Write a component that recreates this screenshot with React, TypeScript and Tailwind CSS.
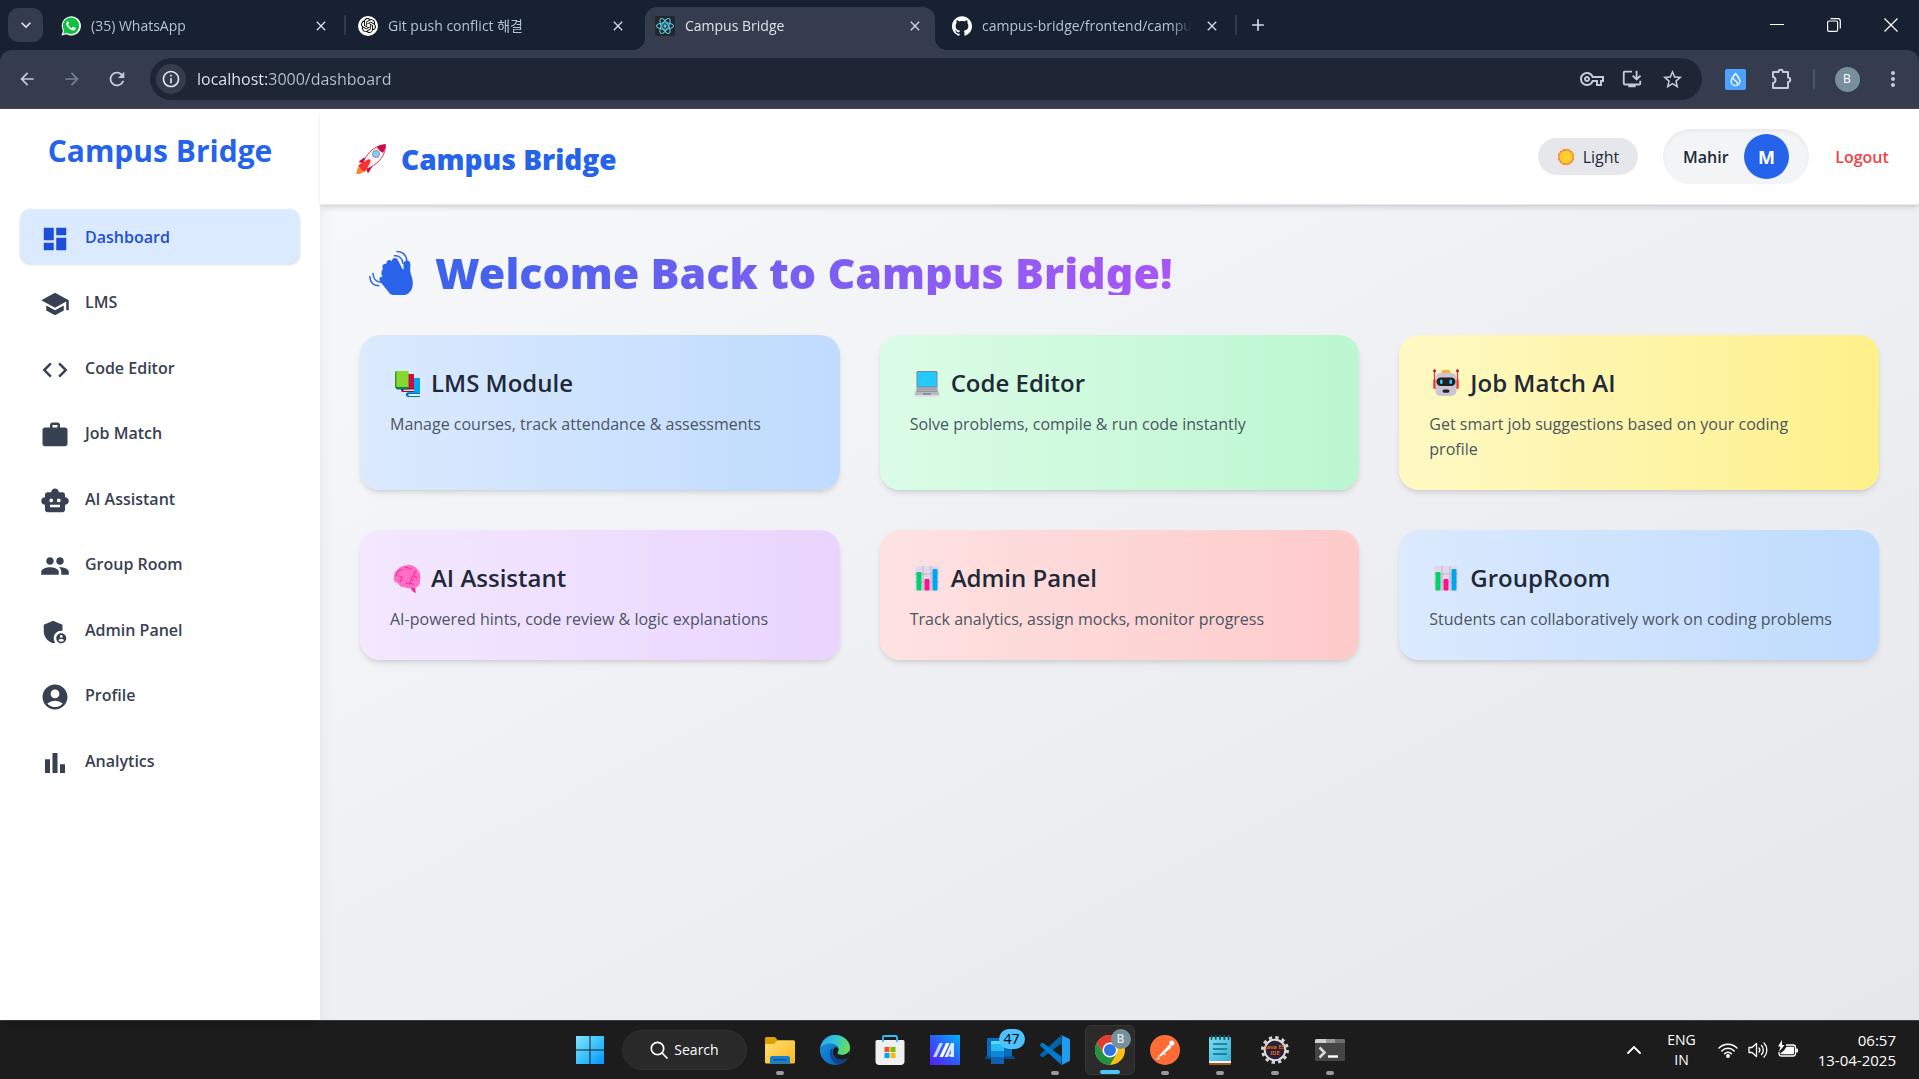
import type { ReactNode } from "react";
import {
  MdAccountCircle,
  MdAdd,
  MdAdminPanelSettings,
  MdArrowBack,
  MdArrowForward,
  MdBarChart,
  MdClose,
  MdCode,
  MdDashboard,
  MdGroup,
  MdInfoOutline,
  MdKeyboardArrowDown,
  MdMoreVert,
  MdOutlineExtension,
  MdOutlineInstallDesktop,
  MdOutlineVpnKey,
  MdRefresh,
  MdSchool,
  MdSmartToy,
  MdStarBorder,
  MdWork,
} from "react-icons/md";
import { SiGithub, SiOpenai } from "react-icons/si";

/* ---------- Favicons ---------- */

const WhatsAppIcon = () => (
  <svg viewBox="0 0 20 20" className="size-5" aria-hidden="true">
    <path d="M0.5 19.5 L2 14.6 A9.6 9.6 0 1 1 5.6 18.2 Z" fill="#fff" />
    <path d="M2.2 17.8 L3.2 14.4 A8.2 8.2 0 1 1 5.9 16.9 Z" fill="#0fc143" />
    <path
      d="M7 5.2c-.4 0-1.7.7-1.7 2.4 0 1.600 1.200 3.200 1.900 4 1 1.200 3.300 2.900 5 2.900 1.500 0 2.500-.9 2.500-1.900 0-.3 0-.6-.2-.7l-2.100-1.100c-.3-.1-.5 0-.7.2l-.7.9c-.2.2-.4.200-.7.1-1.200-.5-2.400-1.600-3.100-2.900-.1-.2 0-.4.100-.6l.6-.8c.1-.2.100-.4 0-.6l-.7-1.600c-.1-.3-.2-.3-.2-.3z"
      fill="#fff"
    />
  </svg>
);

const ChatGptIcon = () => (
  <span className="flex size-5 shrink-0 items-center justify-center rounded-full bg-white text-black">
    <SiOpenai className="size-[15px]" aria-hidden="true" />
  </span>
);

const ReactIcon = () => (
  <svg viewBox="0 0 20 20" className="size-5" aria-hidden="true">
    <rect width="20" height="20" rx="2" fill="#23272a" />
    <g fill="none" stroke="#5ac8e8" strokeWidth="1.100">
      <ellipse cx="10" cy="10" rx="8.500" ry="3.300" />
      <ellipse cx="10" cy="10" rx="8.500" ry="3.300" transform="rotate(60 10 10)" />
      <ellipse cx="10" cy="10" rx="8.500" ry="3.300" transform="rotate(120 10 10)" />
    </g>
    <circle cx="10" cy="10" r="1.700" fill="#5ac8e8" />
  </svg>
);

/* ---------- Browser chrome ---------- */

function Tab({ icon, title, active = false }: { icon: ReactNode; title: string; active?: boolean }) {
  return (
    <div
      className={
        active
          ? "relative flex h-[43px] w-[290px] items-center gap-2.5 rounded-t-xl bg-[#343c4d] px-2.5 pb-1.5 text-[#dfe2ea] before:absolute before:bottom-0 before:-left-3 before:size-3 before:bg-[radial-gradient(circle_at_0_0,#182131_12px,#343c4d_12px)] after:absolute after:-right-3 after:bottom-0 after:size-3 after:bg-[radial-gradient(circle_at_100%_0,#182131_12px,#343c4d_12px)]"
          : "flex h-[43px] w-[290px] items-center gap-2.5 px-2.5 pb-1.5 text-[#b4c1d8]"
      }
    >
      <span className="shrink-0">{icon}</span>
      <span className="min-w-0 flex-1 overflow-hidden text-sm whitespace-nowrap [mask-image:linear-gradient(90deg,#000_90%,transparent)]">
        {title}
      </span>
      <button aria-label={`Close ${title}`} className="flex size-5 shrink-0 items-center justify-center text-[#d3dbea]">
        <MdClose className="size-4" />
      </button>
    </div>
  );
}

const TabDivider = ({ hidden = false }: { hidden?: boolean }) => (
  <span className="mb-[7px] flex w-[7px] justify-center">
    <span className={hidden ? "h-5 w-0.5" : "h-5 w-0.5 rounded bg-[#323b4c]"} />
  </span>
);

function TabStrip() {
  return (
    <div className="flex h-[50px] items-end justify-between bg-[#182131]">
      <div className="flex min-w-0 items-center pl-2">
        <button
          aria-label="Search tabs"
          className="mr-2 mb-[7px] flex h-[34px] w-[35px] items-center justify-center rounded-[10px] bg-[#343c4d] text-[#dfe5f0]"
        >
          <MdKeyboardArrowDown className="size-5" />
        </button>
        <Tab icon={<WhatsAppIcon />} title="(35) WhatsApp" />
        <TabDivider />
        <Tab icon={<ChatGptIcon />} title="Git push conflict 해결" />
        <TabDivider hidden />
        <Tab icon={<ReactIcon />} title="Campus Bridge" active />
        <TabDivider hidden />
        <Tab icon={<SiGithub className="size-5 text-white" />} title="campus-bridge/frontend/campu" />
        <TabDivider />
        <button aria-label="New tab" className="mb-[7px] flex h-8 w-[38px] items-center justify-center text-[#d3dbea]">
          <MdAdd className="size-5" />
        </button>
      </div>
      <div className="flex h-[50px] text-white">
        <button aria-label="Minimize" className="flex w-[57px] items-center justify-center">
          <svg viewBox="0 0 14 14" className="size-3.5" fill="none" stroke="currentColor">
            <path d="M0 6.500h14" />
          </svg>
        </button>
        <button aria-label="Restore" className="flex w-[57px] items-center justify-center">
          <svg viewBox="0 0 14 14" className="size-3.5" fill="none" stroke="currentColor" strokeWidth="1.200">
            <rect x="0.600" y="3" width="10" height="10.400" rx="1.500" />
            <path d="M3.500 0.700h7.500a2.300 2.300 0 0 1 2.300 2.300v7.500" />
          </svg>
        </button>
        <button aria-label="Close window" className="flex w-[57px] items-center justify-center">
          <svg viewBox="0 0 14 14" className="size-3.5" fill="none" stroke="currentColor" strokeWidth="1.200">
            <path d="M0.500 0.500l13 13M13.500 0.500l-13 13" />
          </svg>
        </button>
      </div>
    </div>
  );
}

function Toolbar() {
  return (
    <div className="flex h-[59px] items-center rounded-t-xl border-b border-[#4b4553] bg-[#343c4d] pl-1 text-[#c3cbdb]">
      <button aria-label="Back" className="flex w-[45px] justify-center">
        <MdArrowBack className="size-5" />
      </button>
      <button aria-label="Forward" className="flex w-[45px] justify-center text-[#788193]">
        <MdArrowForward className="size-5" />
      </button>
      <button aria-label="Reload" className="flex w-[45px] justify-center">
        <MdRefresh className="size-[22px]" />
      </button>
      <div className="ml-[11px] flex h-[42px] flex-1 items-center rounded-full bg-[#1e2636] pr-2.5 pl-1.5">
        <button
          aria-label="View site information"
          className="flex size-[30px] items-center justify-center rounded-full bg-[#343c4d] text-[#e0e4ee]"
        >
          <MdInfoOutline className="size-5" />
        </button>
        <input
          aria-label="Address"
          defaultValue="localhost:3000/dashboard"
          className="ml-[11px] min-w-0 flex-1 bg-[linear-gradient(90deg,#e6eaf4_71px,#b7c1d4_71px)] bg-clip-text text-base text-transparent outline-none"
        />
        <button aria-label="Manage passwords" className="flex w-10 justify-center">
          <MdOutlineVpnKey className="size-6" />
        </button>
        <button aria-label="Install app" className="flex w-10 justify-center">
          <MdOutlineInstallDesktop className="size-[22px]" />
        </button>
        <button aria-label="Bookmark this tab" className="flex w-10 justify-center">
          <MdStarBorder className="size-[23px]" />
        </button>
      </div>
      <div className="flex items-center pr-[3px] pl-2.5">
        <button aria-label="Wallet extension" className="flex w-[46px] justify-center">
          <svg viewBox="0 0 21 21" className="size-[21px]">
            <rect width="21" height="21" rx="2" fill="#4da2ff" />
            <path d="M10.500 4.500c2 2.500 4.400 5 4.400 7.800a4.400 4.400 0 0 1-8.800 0c0-2.800 2.400-5.300 4.400-7.800z" fill="none" stroke="#fff" strokeWidth="1.300" />
            <path d="M8.300 9c0 3 5.200 2.700 4.200 6.500" fill="none" stroke="#fff" strokeWidth="1.300" />
          </svg>
        </button>
        <button aria-label="Extensions" className="flex w-[46px] justify-center">
          <svg viewBox="0 0 24 24" className="size-6" fill="none" stroke="currentColor" strokeWidth="2" strokeLinejoin="round">
            <path d="M4 5h5.500a2.200 2.200 0 0 1 4.400 0H19v5.500a2.200 2.200 0 0 1 0 4.400V21H4v-5c3.300-.5 3.300-5.500 0-6z" />
          </svg>
        </button>
        <span className="flex w-5 justify-center">
          <span className="h-5 w-0.5 rounded bg-[#4d5769]" />
        </span>
        <button aria-label="Profile B" className="flex w-[46px] justify-center">
          <span className="flex size-[25px] items-center justify-center rounded-full bg-[#78909c] text-xs text-white">B</span>
        </button>
        <button aria-label="Browser menu" className="flex w-[46px] justify-center">
          <MdMoreVert className="size-6" />
        </button>
      </div>
    </div>
  );
}

/* ---------- Sidebar ---------- */

const navItems = [
  { label: "Dashboard", Icon: MdDashboard },
  { label: "LMS", Icon: MdSchool },
  { label: "Code Editor", Icon: MdCode },
  { label: "Job Match", Icon: MdWork },
  { label: "AI Assistant", Icon: MdSmartToy },
  { label: "Group Room", Icon: MdGroup },
  { label: "Admin Panel", Icon: MdAdminPanelSettings },
  { label: "Profile", Icon: MdAccountCircle },
  { label: "Analytics", Icon: MdBarChart },
];

function Sidebar() {
  return (
    <aside className="relative z-10 w-80 shrink-0 bg-white px-5 pt-6 shadow-lg">
      <h2 className="text-center text-3xl leading-9 font-bold text-[#2563eb]">Campus Bridge</h2>
      <nav className="mt-10">
        <ul className="flex h-[579px] flex-col justify-between">
          {navItems.map(({ label, Icon }, i) => (
            <li key={label}>
              <a
                href="#"
                aria-current={i === 0 ? "page" : undefined}
                className={
                  i === 0
                    ? "flex h-[55px] items-center gap-[15px] rounded-[10px] bg-[#dbeafe] px-5 font-semibold text-[#1d4ed8] shadow-sm"
                    : "flex h-[55px] items-center gap-[15px] rounded-[10px] px-5 font-semibold text-[#374151]"
                }
              >
                <Icon className="mt-1 size-[30px]" aria-hidden="true" />
                {label}
              </a>
            </li>
          ))}
        </ul>
      </nav>
    </aside>
  );
}

/* ---------- Header ---------- */

const RocketIcon = () => (
  <svg viewBox="0 0 32 32" className="size-8" aria-hidden="true">
    <path d="M5 24c-3 1-3.500 4-3.500 7 3 0 6-.5 7.500-3.500z" fill="#ff822d" />
    <path d="M9 14.500 4.500 18c-.6.5-.4 1.400.3 1.500L9.500 20l2 2 .7 7c.1.800 1 1 1.500.4L17 24l1.500-3z" fill="#ca0b4a" />
    <path d="M30.500 1.500C22 2 13 8 8.500 18.500L6 23.500 9.500 27l5.500-2.500C25 19.500 31 11 30.500 1.500z" fill="#f4f4f4" stroke="#ca0b4a" strokeWidth="0.800" />
    <path d="M30.500 1.500c-3.500 0-6 .8-8.500 2.200 1 2.800 3 4.800 6 6.100 1.500-2.500 2.500-5 2.500-8.300z" fill="#ca0b4a" />
    <path d="M5.500 20.500 13 16.500c1.500-.8 3.200.8 2.400 2.400L11 27.500 9 29l-6-6z" fill="#f8312f" />
    <circle cx="21" cy="11" r="3.300" fill="#83cbff" stroke="#9aa0a8" strokeWidth="1.200" />
  </svg>
);

const SunIcon = () => (
  <svg viewBox="0 0 18 18" className="size-[18px]" aria-hidden="true">
    <g fill="#ff8a2b">
      <rect x="2.500" y="2.500" width="13" height="13" rx="2" />
      <rect x="2.500" y="2.500" width="13" height="13" rx="2" transform="rotate(30 9 9)" />
      <rect x="2.500" y="2.500" width="13" height="13" rx="2" transform="rotate(60 9 9)" />
    </g>
    <circle cx="9" cy="9" r="6.500" fill="#ffce31" />
  </svg>
);

function Header() {
  return (
    <header className="relative z-20 flex h-24 items-center justify-between border-b border-[#e5e7eb] bg-white pr-[29px] pl-[35px] shadow-md">
      <h1 className="flex items-center gap-3.5 pt-1 text-[28px] leading-9 font-extrabold text-[#2563eb]">
        <RocketIcon />
        Campus Bridge
      </h1>
      <div className="flex items-center gap-[25px]">
        <button className="flex h-[37px] w-[100px] items-center justify-center gap-2 rounded-full bg-[#e5e7eb] text-base text-[#1f2937]">
          <SunIcon />
          Light
        </button>
        <div className="flex h-[55px] w-[146px] items-center justify-between rounded-full bg-[#f3f4f6] px-5 shadow-[inset_0_2px_4px_rgba(0,0,0,0.05)]">
          <span className="font-semibold text-[#1f2937]">Mahir</span>
          <span className="flex size-[45px] items-center justify-center rounded-full bg-[#2563eb] text-lg font-bold text-white">M</span>
        </div>
        <button className="w-14 text-center font-semibold text-[#ef4444]">Logout</button>
      </div>
    </header>
  );
}

/* ---------- Dashboard ---------- */

const WaveIcon = () => (
  <svg viewBox="0 0 60 50" className="h-[50px] w-[60px]" aria-hidden="true">
    <g transform="translate(0 3)">
      <path
        d="M23 20.500c-2-2.500 1-6 3.500-4.200-1-3.500 3-6 5.200-3 .2-3.800 5-4.600 6.300-1.100l4.400 8.800 1.400.2c-.3-3-1.200-6.600 1.500-8.300 2.500-1.300 5 .2 5.100 3.200.1 3.500-.9 7 .8 10.800 2.800 7.500 2 15.500-3 18.500-5 3-12.500 3.500-18 .5L20.500 34c-3-3.400.4-6.600 2.500-4.600-3.300-4-.6-8 0-8.900z"
        fill="#2c63eb"
      />
      <g fill="none" stroke="#2c63eb" strokeWidth="1.500" strokeLinecap="round">
        <path d="M34.500 7.800c4.500-.5 7.800 2.700 8.500 7.500" />
        <path d="M37 3.500c5.500.2 9 3.700 9.800 8.800" />
        <path d="M13 25.500c.2 5 3.200 8.500 8 8.800" />
        <path d="M9.800 28.500c.3 5.500 3.800 9 9 9.300" />
      </g>
    </g>
  </svg>
);

const BooksIcon = () => (
  <svg viewBox="0 0 34 34" className="size-[34px]" aria-hidden="true">
    <path d="M19 12h11v16H17z" fill="#00a6ed" />
    <path d="M16 27h14v4H18a2 2 0 0 1-2-2z" fill="#0074ba" />
    <path d="M18.500 28H30v2H18.500z" fill="#e8f1f8" />
    <path d="M13 8h11v16H12z" fill="#ca0b4a" />
    <path d="M11 22h13v4H13a2 2 0 0 1-2-2z" fill="#990838" />
    <path d="M13.500 23.500H24v1.500H13.500z" fill="#f2dbe4" />
    <path d="M6 5h12.500v16.500H5.500z" fill="#86d72f" />
    <path d="M5 6.500A1.500 1.500 0 0 1 6.500 5v17H6a1 1 0 0 1-1-1z" fill="#44911b" />
    <path d="M6 21h12.500v2.500H7A2 2 0 0 1 6 21z" fill="#008463" />
  </svg>
);

const LaptopIcon = () => (
  <svg viewBox="0 0 34 34" className="size-[34px]" aria-hidden="true">
    <rect x="6.500" y="5" width="21" height="17.500" rx="1.200" fill="#7b8794" />
    <rect x="7.500" y="6" width="19" height="14.500" rx="0.600" fill="#26c9fc" />
    <path d="M6.500 21.500h21l2 7.500h-25z" fill="#b8bcc2" />
    <path d="M7.800 22.500h18.400l1 3.500H6.800z" fill="#94989e" />
    <path d="M7.500 24.200h19" stroke="#c9ccd1" strokeWidth="0.600" />
    <rect x="13" y="27" width="8" height="1.800" fill="#8a8e94" />
    <rect x="4.500" y="29" width="25" height="1.700" rx="0.800" fill="#d9dbdf" />
  </svg>
);

const RobotIcon = () => (
  <svg viewBox="0 0 34 34" className="size-[34px]" aria-hidden="true">
    <path d="M5.500 5v17M28.500 5v17" stroke="#f8312f" strokeWidth="1.200" />
    <circle cx="5.500" cy="4.800" r="1.500" fill="#ca0b4a" />
    <circle cx="28.500" cy="4.800" r="1.500" fill="#ca0b4a" />
    <rect x="4.300" y="13" width="3" height="10" rx="1.500" fill="#f8312f" />
    <rect x="26.700" y="13" width="3" height="10" rx="1.500" fill="#f8312f" />
    <rect x="12.500" y="4" width="9" height="4.500" rx="2" fill="#ffb02e" />
    <rect x="6.500" y="7" width="21" height="23" rx="5" fill="#cdc4d6" />
    <rect x="7.500" y="11.500" width="19" height="8.500" rx="4.200" fill="#212121" />
    <rect x="11" y="13.500" width="2.600" height="4.500" rx="1.200" fill="#26c9fc" />
    <rect x="20.400" y="13.500" width="2.600" height="4.500" rx="1.200" fill="#26c9fc" />
    <rect x="13.500" y="23.500" width="7" height="3.200" rx="1.600" fill="#212121" />
  </svg>
);

const BrainIcon = () => (
  <svg viewBox="0 0 34 34" className="size-[34px]" aria-hidden="true">
    <path d="M20 25l5 1.500 1 5.500c-3-.5-5-3-6-7z" fill="#fb2b95" />
    <path
      d="M16 4.500c5-1.500 9 .5 11 3.500 3.500 3 4 8 3 12 0 4-2 6.500-5 6.500-3.500 1.300-8 1-11-.5-3 .5-5-1-5.500-3.500C4.500 21.500 3 18.500 4 15c.5-5.500 6-10 12-10.500z"
      fill="#ff6dc6"
    />
    <g fill="none" stroke="#fb2b95" strokeWidth="1.100" strokeLinecap="round">
      <path d="M15 6c2 1.500 4 .5 6 2" />
      <path d="M6 15c.5-3.500 3-6 6-6.500" />
      <path d="M10 21c.5-2 2.500-3 2-5M12 17l-2-1.500" />
      <path d="M26 10c-2.500 1.500-1 4-3.500 5.500s-1 3 .5 4" />
      <path d="M16 22c2.500 1.500 5 0 7.500 1M20 22l1-2.500M24 15l3 2" />
    </g>
  </svg>
);

const ChartIcon = () => (
  <svg viewBox="0 0 34 34" className="size-[34px]" aria-hidden="true">
    <rect x="5" y="5" width="24" height="25" rx="2.500" fill="#e1d8ec" />
    <path d="M5 13h24M5 21h24M13 5v25M21 5v25" stroke="#b9b0c6" strokeWidth="0.900" />
    <rect x="6.500" y="11" width="5" height="18.500" rx="1" fill="#00d26a" />
    <rect x="14.500" y="18" width="5" height="11.500" rx="1" fill="#fc1090" />
    <rect x="22.500" y="8" width="5" height="21.500" rx="1" fill="#00a6ed" />
  </svg>
);

const cards = [
  {
    title: "LMS Module",
    text: "Manage courses, track attendance & assessments",
    Icon: BooksIcon,
    tone: "from-[#dbeafe] to-[#bfdbfe]",
  },
  {
    title: "Code Editor",
    text: "Solve problems, compile & run code instantly",
    Icon: LaptopIcon,
    tone: "from-[#dcfce7] to-[#bbf7d0]",
  },
  {
    title: "Job Match AI",
    text: "Get smart job suggestions based on your coding profile",
    Icon: RobotIcon,
    tone: "from-[#fef9c3] to-[#fef08a]",
  },
  {
    title: "AI Assistant",
    text: "AI-powered hints, code review & logic explanations",
    Icon: BrainIcon,
    tone: "from-[#f3e8ff] to-[#e9d5ff]",
  },
  {
    title: "Admin Panel",
    text: "Track analytics, assign mocks, monitor progress",
    Icon: ChartIcon,
    tone: "from-[#fee2e2] to-[#fecaca]",
  },
  {
    title: "GroupRoom",
    text: "Students can collaboratively work on coding problems",
    Icon: ChartIcon,
    tone: "from-[#dbeafe] to-[#bfdbfe]",
  },
];

function Dashboard() {
  return (
    <main className="flex-1 bg-linear-to-br from-[#f7f8fa] to-[#e5e7eb] px-10 pt-10">
      <h2 className="mb-10 flex w-fit items-end gap-[15px] bg-linear-to-r from-[#2563eb] to-[#a855f7] bg-clip-text font-['Noto_Sans'] text-[43px] leading-[45px] font-black text-transparent">
        <WaveIcon />
        Welcome Back to Campus Bridge!
      </h2>
      <div className="grid grid-cols-3 gap-10">
        {cards.map(({ title, text, Icon, tone }) => (
          <a key={title} href="#" className={`rounded-[20px] bg-linear-to-r pt-[30px] pr-11 pb-7 pl-[30px] shadow-md ${tone}`}>
            <h3 className="mb-[11px] flex items-center gap-[7px] text-2xl leading-9 font-semibold text-[#1f2937]">
              <Icon />
              {title}
            </h3>
            <p className="text-base leading-[25px] text-[#4b5563]">{text}</p>
          </a>
        ))}
      </div>
    </main>
  );
}

/* ---------- Taskbar ---------- */

const StartIcon = () => (
  <svg viewBox="0 0 30 30" className="size-[30px]">
    <defs>
      <linearGradient id="start" x1="0" y1="0" x2="30" y2="30" gradientUnits="userSpaceOnUse">
        <stop offset="0" stopColor="#8be3ff" />
        <stop offset="0.500" stopColor="#3cc3fc" />
        <stop offset="1" stopColor="#0091ff" />
      </linearGradient>
    </defs>
    <path d="M1 1h13.500v13.500H1zM15.500 1H29v13.500H15.500zM1 15.500h13.500V29H1zM15.500 15.500H29V29H15.500z" fill="url(#start)" />
  </svg>
);

const ExplorerIcon = () => (
  <svg viewBox="0 0 30 30" className="size-[30px]">
    <defs>
      <linearGradient id="folder" x1="0" y1="0" x2="1" y2="1">
        <stop offset="0" stopColor="#ffdf76" />
        <stop offset="1" stopColor="#fbb81a" />
      </linearGradient>
    </defs>
    <path d="M0 3.500A1.500 1.500 0 0 1 1.500 2H10l3 3.500V10H0z" fill="#e0a100" />
    <path d="M0 9h9l4-3.800h15.500A1.500 1.500 0 0 1 30 6.700V27a1.500 1.500 0 0 1-1.500 1.500h-27A1.500 1.500 0 0 1 0 27z" fill="url(#folder)" />
    <path d="M5 28.500V23a2 2 0 0 1 2-2h16a2 2 0 0 1 2 2v5.500z" fill="#1281d0" />
    <rect x="8" y="24" width="14" height="1.200" rx="0.600" fill="#0a4f8f" />
  </svg>
);

const EdgeIcon = () => (
  <svg viewBox="0 0 30 30" className="size-[30px]">
    <defs>
      <linearGradient id="edgeTop" x1="0" y1="0.300" x2="1" y2="0.600">
        <stop offset="0" stopColor="#2aa6e8" />
        <stop offset="0.450" stopColor="#33c5d8" />
        <stop offset="1" stopColor="#6be14a" />
      </linearGradient>
      <linearGradient id="edgeLow" x1="0" y1="0" x2="1" y2="1">
        <stop offset="0" stopColor="#1694e0" />
        <stop offset="1" stopColor="#0a5cb5" />
      </linearGradient>
    </defs>
    <circle cx="15" cy="15" r="15" fill="url(#edgeLow)" />
    <path d="M0.300 13C1.500 5.500 7.500 0 15 0c8.500 0 15 6 15 12.500 0 4.500-3.500 7.500-8 7.500-2.500 0-4.500-.8-4.500-2 0-.8 1.200-1.500 1.200-3.500 0-3.500-3.700-6-8.200-6C6 8.500 2 10 .3 13z" fill="url(#edgeTop)" />
    <path d="M11 14c-2.500 4.500-.5 14 7.500 15.600 4-.8 7-3 9-6.100-6 3-13.500 1.500-15-4.500-.5-2-.3-4 .5-5.500z" fill="#10458f" />
    <path d="M18.500 14.500c0 2-1.200 2.700-1.200 3.500 0 1.200 2.200 2 4.700 2 3 0 5.500-1.200 7-3.500.8 0 .5 4-1.500 7-6 2.800-13 1.300-14.500-4.500-.7-3 .5-6 2.500-7 1.800-.3 3 .8 3 2.500z" fill="#1c1c1c" />
    <path d="M27.500 22.700c-4.500 2.800-10.500 2.300-13.500-2 1.500 5.500 7 7.500 11.500 5z" fill="#123e80" />
  </svg>
);

const StoreIcon = () => (
  <svg viewBox="0 0 30 30" className="size-[30px]">
    <path d="M8 7V2.300A1.300 1.300 0 0 1 9.300 1h11.400A1.300 1.300 0 0 1 22 2.300V7" fill="none" stroke="#32bdf2" strokeWidth="1.800" />
    <path d="M0.500 6.500A1.500 1.500 0 0 1 2 5h26a1.500 1.500 0 0 1 1.500 1.500V26a4 4 0 0 1-4 4h-21a4 4 0 0 1-4-4z" fill="#f0f0f0" />
    <path d="M8 5v2M22 5v2" stroke="#32bdf2" strokeWidth="1.800" />
    <rect x="9.500" y="12" width="5" height="5" fill="#f25022" />
    <rect x="15.500" y="12" width="5" height="5" fill="#7fba00" />
    <rect x="9.500" y="18" width="5" height="5" fill="#00a4ef" />
    <rect x="15.500" y="18" width="5" height="5" fill="#ffb900" />
  </svg>
);

const MyAsusIcon = () => (
  <svg viewBox="0 0 30 30" className="size-[30px]">
    <defs>
      <linearGradient id="asus" x1="0" y1="1" x2="1" y2="0">
        <stop offset="0" stopColor="#5b1cf5" />
        <stop offset="0.500" stopColor="#2b5df8" />
        <stop offset="1" stopColor="#00b2ff" />
      </linearGradient>
    </defs>
    <rect width="30" height="30" fill="url(#asus)" />
    <path d="M3 22 9.500 8H13L6.500 22z" fill="#c6d6ff" />
    <path d="M9.500 22 16 8h3.500L13 22z" fill="#fff" />
    <path d="M14.500 22 21 8h3v14h-3.200v-7.500L18 22z" fill="#dfe9ff" />
    <circle cx="20.500" cy="20.500" r="1.300" fill="#fff" />
  </svg>
);

const PhoneLinkIcon = () => (
  <svg viewBox="0 0 30 30" className="size-[30px]">
    <rect x="2" y="3" width="25" height="20" rx="1" fill="#0a6cb8" />
    <rect x="0" y="21.500" width="30" height="2.500" rx="1" fill="#0a4a86" />
    <rect x="6" y="6" width="13" height="23" rx="1" fill="#28b8f0" />
    <path d="M6 16h13v6H6z" fill="#0e87d8" />
    <path d="M6 22h13v6a1 1 0 0 1-1 1H7a1 1 0 0 1-1-1z" fill="#1160b0" />
    <path d="M6 7a1 1 0 0 1 1-1h11a1 1 0 0 1 1 1v2H6z" fill="#54dcfb" />
  </svg>
);

const VsCodeIcon = () => (
  <svg viewBox="0 0 30 30" className="size-[30px]">
    <path d="M21.800 8.200 3.200 22a1.200 1.200 0 0 1-1.600-.1L.4 20.800a1.200 1.200 0 0 1 0-1.800L21 .5z" fill="#0065a9" />
    <path d="M21.800 21.800 3.200 8a1.200 1.200 0 0 0-1.600.1L.4 9.200a1.200 1.200 0 0 0 0 1.800L21 29.500z" fill="#007acc" />
    <path d="M21.500 29.800a1.900 1.900 0 0 1-1-.8c.7.700 1.500.2 1.500-.700V1.700c0-.9-.9-1.400-1.500-.7.300-.5.700-.8 1.300-.7l6.900 3.200c.8.400 1.300 1 1.300 1.800v19.400c0 .8-.5 1.400-1.300 1.800l-6 3c-.4.200-.8.300-1.200.3z" fill="#1f9cf0" />
  </svg>
);

const ChromeIcon = () => (
  <svg viewBox="0 0 30 30" className="size-[30px]">
    <circle cx="15" cy="15" r="15" fill="#fbc116" />
    <path d="M15 15 8.500 18.800 2 7.500A15 15 0 0 1 28 7.500H15z" fill="#e33b2e" />
    <path d="M2 7.500a15 15 0 0 0 13 22.500l6.500-11.200L15 15l-6.500 3.800z" fill="#229342" />
    <circle cx="15" cy="15" r="7.500" fill="#fff" />
    <circle cx="15" cy="15" r="6" fill="#2f73e8" />
  </svg>
);

const PostmanIcon = () => (
  <svg viewBox="0 0 30 30" className="size-[30px]">
    <circle cx="15" cy="15" r="15" fill="#ff6c37" />
    <path d="M7 23.500l3-4 7-7.500 2.500 2-7.500 6.500zM17 11.500l2.500-1.700 2 2-1.700 2.700z" fill="#fff" />
    <circle cx="21.800" cy="8" r="2.600" fill="#fff" />
    <path d="M6 24l4-.5M14 18.500l1.500 1.500" stroke="#fff" strokeWidth="1.200" />
  </svg>
);

const NotepadIcon = () => (
  <svg viewBox="0 0 30 30" className="size-[30px]">
    <defs>
      <linearGradient id="note" x1="0" y1="0" x2="1" y2="1">
        <stop offset="0" stopColor="#7fe0f2" />
        <stop offset="1" stopColor="#35aed0" />
      </linearGradient>
    </defs>
    <rect x="4" y="24" width="22" height="6" rx="1" fill="#a4561a" />
    <rect x="4" y="23" width="22" height="5" fill="#f4f4f4" />
    <rect x="4" y="2" width="22" height="24" rx="1" fill="url(#note)" />
    <path d="M8 9h14M8 14h14M8 19h14" stroke="#0f6f90" strokeWidth="1.600" />
    <path d="M6.500 0v4M10.700 0v4M15 0v4M19.300 0v4M23.500 0v4" stroke="#12576f" strokeWidth="1.800" strokeLinecap="round" />
  </svg>
);

const EclipseIcon = () => (
  <svg viewBox="0 0 30 30" className="size-[30px]">
    <circle cx="15" cy="15" r="12.500" fill="none" stroke="#d5d5d5" strokeWidth="3" strokeDasharray="3.300 3.240" />
    <circle cx="15" cy="15" r="10.300" fill="#2c2038" stroke="#dcdcdc" strokeWidth="2" />
    <text x="15" y="13.500" textAnchor="middle" fontSize="6" fontWeight="600" fill="#f57c14">
      Java EE
    </text>
    <text x="15" y="20" textAnchor="middle" fontSize="6" fontWeight="600" fill="#f57c14">
      IDE
    </text>
  </svg>
);

const TerminalIcon = () => (
  <svg viewBox="0 0 30 30" className="size-[30px]">
    <rect y="4" width="30" height="22" rx="1.500" fill="#454545" />
    <path d="M0 5.500A1.500 1.500 0 0 1 1.500 4H11v4H0z" fill="#cfcfcf" />
    <path d="M11 4h9v4h-9z" fill="#9a9a9a" />
    <path d="M20 4h8.500A1.500 1.500 0 0 1 30 5.500V8H20z" fill="#6d6d6d" />
    <path d="M4.500 12.500 9.500 17.500 4.500 22.500" fill="none" stroke="#d8d8d8" strokeWidth="2.600" />
    <path d="M13 21.500h10" stroke="#fff" strokeWidth="2.400" />
  </svg>
);

const apps: { name: string; Icon: () => ReactNode; open?: boolean; active?: boolean; badge?: string }[] = [
  { name: "File Explorer", Icon: ExplorerIcon, open: true },
  { name: "Edge", Icon: EdgeIcon },
  { name: "Store", Icon: StoreIcon },
  { name: "MyASUS", Icon: MyAsusIcon },
  { name: "Phone Link", Icon: PhoneLinkIcon, badge: "47" },
  { name: "VS Code", Icon: VsCodeIcon, open: true },
  { name: "Chrome", Icon: ChromeIcon, open: true, active: true },
  { name: "Postman", Icon: PostmanIcon, open: true },
  { name: "Notepad", Icon: NotepadIcon, open: true },
  { name: "Eclipse", Icon: EclipseIcon, open: true },
  { name: "Terminal", Icon: TerminalIcon, open: true },
];

function Taskbar() {
  return (
    <footer className="grid h-[59px] grid-cols-[1fr_auto_1fr] items-center border-t border-[#393c42] bg-[#1c1c1c] text-white">
      <div />
      <div className="flex items-center">
        <button aria-label="Start" className="flex w-[55px] justify-center">
          <StartIcon />
        </button>
        <button className="mx-[5px] flex h-10 w-[125px] items-center justify-center gap-1.5 rounded-full border border-[#303030] bg-[#292929] text-sm">
          <svg viewBox="0 0 18 18" className="size-[18px]" fill="none" stroke="currentColor" strokeWidth="1.700" strokeLinecap="round">
            <circle cx="7.500" cy="7.500" r="6.200" />
            <path d="M12.200 12.200 17 17" />
          </svg>
          Search
        </button>
        {apps.map(({ name, Icon, open, active, badge }) => (
          <div key={name} className="flex w-[55px] justify-center">
            <button
              aria-label={name}
              className={
                active
                  ? "relative flex size-[50px] items-center justify-center rounded-md border border-[#363636] bg-[#2b2b2b]"
                  : "relative flex size-[50px] items-center justify-center"
              }
            >
              <Icon />
              {badge && (
                <span className="absolute top-1 right-0 flex h-5 w-[26px] items-center justify-center rounded-full bg-[#4cc2ff] text-sm text-black">
                  {badge}
                </span>
              )}
              {active && (
                <span className="absolute top-[3px] right-[3px] flex size-5 items-center justify-center rounded-full bg-[#78909c] text-xs font-semibold text-[#dfe6ea]">
                  B
                </span>
              )}
              {open && (
                <span
                  className={
                    active
                      ? "absolute bottom-0 h-1 w-5 rounded-full bg-[#4cc2ff]"
                      : "absolute bottom-0 h-1 w-2 rounded-full bg-[#9a9a9a]"
                  }
                />
              )}
            </button>
          </div>
        ))}
      </div>
      <div className="flex items-center justify-end pr-[23px] text-sm">
        <button aria-label="Show hidden icons" className="mr-[25px]">
          <svg viewBox="0 0 16 16" className="size-4" fill="none" stroke="currentColor" strokeWidth="1.800" strokeLinecap="round">
            <path d="M2 11 8 5l6 6" />
          </svg>
        </button>
        <button className="mr-[22px] text-center leading-5">
          ENG
          <br />
          IN
        </button>
        <button aria-label="Network, volume and battery" className="mr-5 flex gap-2.5">
          <svg viewBox="0 0 20 20" className="size-5" fill="none" stroke="currentColor" strokeWidth="1.500" strokeLinecap="round">
            <path d="M1 8a12.500 12.500 0 0 1 18 0M3.800 11a8.500 8.500 0 0 1 12.400 0M6.600 13.800a4.700 4.700 0 0 1 6.800 0" />
            <circle cx="10" cy="16" r="1.200" fill="currentColor" />
          </svg>
          <svg viewBox="0 0 20 20" className="size-5" fill="none" stroke="currentColor" strokeWidth="1.300" strokeLinecap="round" strokeLinejoin="round">
            <path d="M1 7.500h3L8.500 3.500v13L4 12.500H1z" />
            <path d="M11 8a3 3 0 0 1 0 4M13.500 5.500a6.500 6.500 0 0 1 0 9M16 3a10 10 0 0 1 0 14" />
          </svg>
          <svg viewBox="0 0 20 20" className="size-5" aria-hidden="true">
            <path d="M8 5h7a2.500 2.500 0 0 1 2.500 2.500v6A2.500 2.500 0 0 1 15 16H3.500A2.500 2.500 0 0 1 1 13.500V12" fill="none" stroke="currentColor" strokeWidth="1.300" />
            <path d="M8.500 6.800H15a1 1 0 0 1 1 1v5.400a1 1 0 0 1-1 1H3.500a1 1 0 0 1-1-1L6 10.500z" fill="currentColor" />
            <path d="M18.200 8.500H19a1 1 0 0 1 1 1v2a1 1 0 0 1-1 1h-.8z" fill="currentColor" />
            <path d="M4 0 0 6.500h2.500L1 12 6.500 5H4z" fill="currentColor" />
          </svg>
        </button>
        <button className="text-right text-[15px] leading-5">
          06:57
          <br />
          13-04-2025
        </button>
      </div>
    </footer>
  );
}

export default function App() {
  return (
    <div className="flex min-h-screen flex-col bg-[#182131] font-['Open_Sans','Noto_Sans_CJK_KR',sans-serif]">
      <TabStrip />
      <Toolbar />
      <div className="flex flex-1 bg-white">
        <Sidebar />
        <div className="flex min-w-0 flex-1 flex-col">
          <Header />
          <Dashboard />
        </div>
      </div>
      <Taskbar />
    </div>
  );
}
